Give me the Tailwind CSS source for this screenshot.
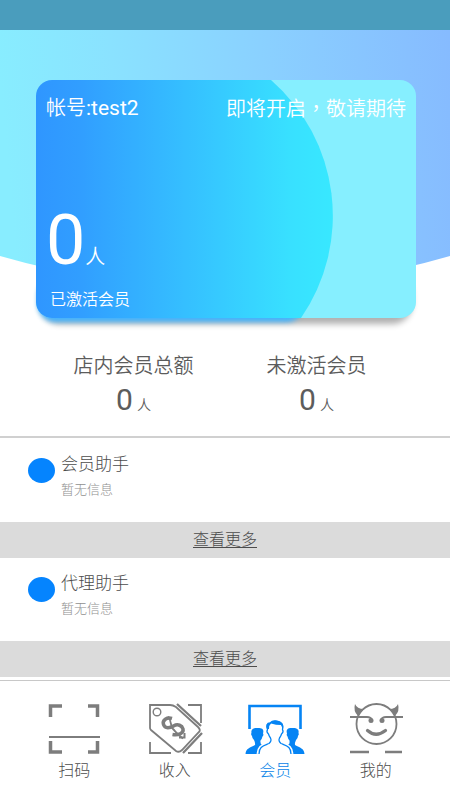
<!DOCTYPE html>
<html lang="zh-CN">
<head>
<meta charset="utf-8">
<meta name="viewport" content="width=device-width, initial-scale=1">
<title>会员</title>
<script src="https://cdn.jsdelivr.net/npm/@tailwindcss/browser@4"></script>
</head>
<body class="flex min-h-screen flex-col bg-white font-['Roboto','Noto_Sans_CJK_SC',sans-serif] text-[#4c4c4c]">
<div class="h-[30px] bg-[#4a9dbd]"></div>

<main class="flex-1">
  <section class="relative pt-[50px] pr-[34px] pl-9">
    <!-- Curved backdrop -->
    <svg class="absolute inset-x-0 top-0 h-[258px] w-full" viewBox="0 0 450 258" preserveAspectRatio="none" aria-hidden="true">
      <defs><linearGradient id="sky" gradientUnits="userSpaceOnUse" x1="0" y1="50" x2="450" y2="10">
        <stop offset="0" stop-color="#88edff"/><stop offset=".25" stop-color="#8ae2ff"/><stop offset=".6" stop-color="#8ad0ff"/><stop offset="1" stop-color="#86bbff"/>
      </linearGradient></defs>
      <path d="M0 0H450V226A808 808 0 0 1 0 226Z" fill="url(#sky)"/>
    </svg>
    <div class="relative">
      <div class="absolute inset-x-2 bottom-0 h-10 rounded-2xl shadow-[0_2px_6px_4px_#00000050]"></div>
      <div class="absolute bottom-0 left-1 h-10 w-[262px] rounded-2xl bg-[#35b4ff] shadow-[0_2px_5px_2px_#42b4ff]"></div>
      <div class="relative flex h-[238px] flex-col justify-between overflow-hidden rounded-2xl bg-[#86efff] text-white">
        <svg class="absolute left-0 top-0" width="380" height="238" viewBox="0 0 380 238" aria-hidden="true">
          <defs><linearGradient id="disc" gradientUnits="userSpaceOnUse" x1="0" y1="0" x2="297" y2="0">
            <stop offset="0" stop-color="#2f96ff"/><stop offset=".15" stop-color="#319eff"/><stop offset=".5" stop-color="#35bfff"/><stop offset=".85" stop-color="#38e0ff"/><stop offset="1" stop-color="#38e8ff"/>
          </linearGradient></defs>
          <path d="M0 0H235A180 180 0 0 1 265 238H0Z" fill="url(#disc)"/>
        </svg>
        <div class="relative flex justify-between px-[10px] pt-3 text-xl leading-8">
          <p><span class="font-[350]">帐号</span><span class="text-[21px]">:test2</span></p>
          <p class="font-[350]">即将开启<span class="font-['Noto_Sans_CJK_TC',sans-serif]" lang="zh-TW">，</span>敬请期待</p>
        </div>
        <div class="relative px-[10px] pb-[6px]">
          <p class="flex items-baseline"><span class="text-[70px] leading-[72px]">0</span><span class="text-xl font-[350]">人</span></p>
          <p class="px-1 pt-3 text-base leading-6 font-[350]">已激活会员</p>
        </div>
      </div>
    </div>
  </section>

  <section class="grid grid-cols-2 border-b-2 border-[#d0d0d0] px-[42px] pt-8 pb-[13px] text-center text-[#5c5c5c]">
    <div>
      <h2 class="text-xl leading-8 font-[350]">店内会员总额</h2>
      <p class="leading-9"><span class="text-[30px]">0</span> <span class="text-sm font-[350]">人</span></p>
    </div>
    <div>
      <h2 class="text-xl leading-8 font-[350]">未激活会员</h2>
      <p class="leading-9"><span class="text-[30px]">0</span> <span class="text-sm font-[350]">人</span></p>
    </div>
  </section>

  <section>
    <div class="flex h-[84px] gap-[6px] pt-[14px] pl-7">
      <span class="mt-[6px] h-[25px] w-[27px] rounded-[50%] bg-[#0584fe]"></span>
      <div>
        <h3 class="text-[17px] leading-6 font-light">会员助手</h3>
        <p class="pt-1 text-[13px] leading-5 font-light text-[#909090]">暂无信息</p>
      </div>
    </div>
    <a href="#member" class="block h-9 bg-[#dbdbdb] text-center text-base leading-9 font-light underline underline-offset-2">查看更多</a>
  </section>
  <section>
    <div class="flex h-[83px] gap-[6px] pt-[13px] pl-7">
      <span class="mt-[6px] h-[25px] w-[27px] rounded-[50%] bg-[#0584fe]"></span>
      <div>
        <h3 class="text-[17px] leading-6 font-light">代理助手</h3>
        <p class="pt-1 text-[13px] leading-5 font-light text-[#909090]">暂无信息</p>
      </div>
    </div>
    <a href="#agent" class="block h-9 bg-[#dbdbdb] text-center text-base leading-9 font-light underline underline-offset-2">查看更多</a>
  </section>
</main>

<nav class="grid h-[120px] grid-cols-4 border-t border-[#c8c8c8] px-6 pt-[22px] text-center text-base leading-8 font-light">
  <a href="#scan" class="flex flex-col items-center">
    <svg width="60" height="52" viewBox="0 0 60 52" fill="none" stroke="#7d7d7d" aria-hidden="true">
      <path d="M6.500 14V3H18M44 3H53.500V14M6.500 38V49H18M44 49H53.500V38" stroke-width="3.500"/>
      <path d="M5 34H56" stroke-width="2.200"/>
    </svg>扫码
  </a>
  <a href="#income" class="flex flex-col items-center">
    <svg width="60" height="52" viewBox="0 0 60 52" fill="none" stroke="#7d7d7d" stroke-width="1.800" aria-hidden="true">
      <path d="M5 2H25Q28 2 31 4L53 24Q56 27 54 29L37 47Q34 50 31 48L6 27Q5 26 5 25Z"/>
      <circle cx="12" cy="9" r="3.800" stroke-width="1.400"/>
      <path d="M32 1L56 23M38 50L57 30" stroke-width="2.300"/>
      <path d="M43 2H56V20M5 39V50H26M43 50H56V39"/>
      <path d="M27 15.500C22 14 17 17 18.500 21.500C20 26 25 25 28.500 23C33 20.500 37 22.500 38 26C39 30.500 33 32.500 27.500 31.500" stroke-width="3.500"/>
      <path d="M23 13.500C27 18 25 23 28 26S33 32 38 35.500" stroke-width="1.800"/>
      <path d="M34 34.500H39.500V30" stroke-width="2"/>
    </svg>收入
  </a>
  <a href="#members" aria-current="page" class="flex flex-col items-center text-[#0a84e8]">
    <svg width="60" height="52" viewBox="0 0 60 52" fill="#0584f4" aria-hidden="true">
      <path d="M4.500 26V3H55.500V26" fill="none" stroke="#0584f4" stroke-width="2.600"/>
      <path d="M0.500 51C1 45 5 45 10 42Q10.500 40 9 37Q7 35 7 33Q5.500 31 6.500 30C5.500 26 9 24.500 13 25C18 25 19 27 18 30.500Q19 32 17.500 33.500Q17 36 15.500 37.500Q15 41 17 42L22 44L18 51Z"/>
      <path d="M59.500 51C59 45 55 45 50 42Q49.500 40 51 37Q53 35 53 33Q54.500 31 53.500 30C54.500 26 51 24.500 47 25C42 25 41 27 42 30.500Q41 32 42.500 33.500Q43 36 44.500 37.500Q45 41 43 42L38 44L42 51Z"/>
      <path d="M13.500 51C14 43.500 18 43 25 39.500Q27 37 25.500 35Q24 33 23.500 31Q21 29 22.500 26.500Q20.500 20 25 20Q28 17 33 18.500Q39 20 37.500 26.500Q39 29 36.500 31Q36 33 34.500 35Q33 37 35 39.500C42 43 46 43.500 46.500 51" fill="#fff" stroke="#fff" stroke-width="4"/>
      <path d="M14 51C14 43.500 18 43 24 40.500Q27 38 25.500 35Q24 33 23.500 31Q21 29 22.500 26.500Q20.500 20 25 20Q28 17 33 18.500Q39 20 37.500 26.500Q39 29 36.500 31Q36 33 34.500 35Q33 38 36 40.500C42 43 46 43.500 46 51" fill="none" stroke="#0584f4" stroke-width="1.300"/>
      <path d="M22 26Q20 20 24.500 20Q29 16 35 18.500Q39.500 21 38 26.500L36 22Q31 22 26 20.500Q24 22 24 26Z"/>
    </svg>会员
  </a>
  <a href="#mine" class="flex flex-col items-center">
    <svg width="60" height="52" viewBox="0 0 60 52" fill="none" stroke="#7d7d7d" stroke-width="1.800" aria-hidden="true">
      <circle cx="30.500" cy="21" r="20"/>
      <path d="M4 14H21Q25 14 26 17M57 14H40Q36 14 35 17"/>
      <path d="M21.500 27.500Q30 35 39.500 27.500" stroke-width="3.200" stroke-linecap="round"/>
      <path d="M4 49H23M39 49H56" stroke-width="2.300"/>
      <path d="M9 1Q11 6 18 6L12 13Q7 8 9 1ZM52 1Q50 6 43 6L49 13Q54 8 52 1Z" fill="#7d7d7d" stroke="none"/>
      <circle cx="25" cy="17.500" r="2.500" fill="#7d7d7d" stroke="none"/>
      <circle cx="36" cy="17.500" r="2.500" fill="#7d7d7d" stroke="none"/>
    </svg>我的
  </a>
</nav>
</body>
</html>
